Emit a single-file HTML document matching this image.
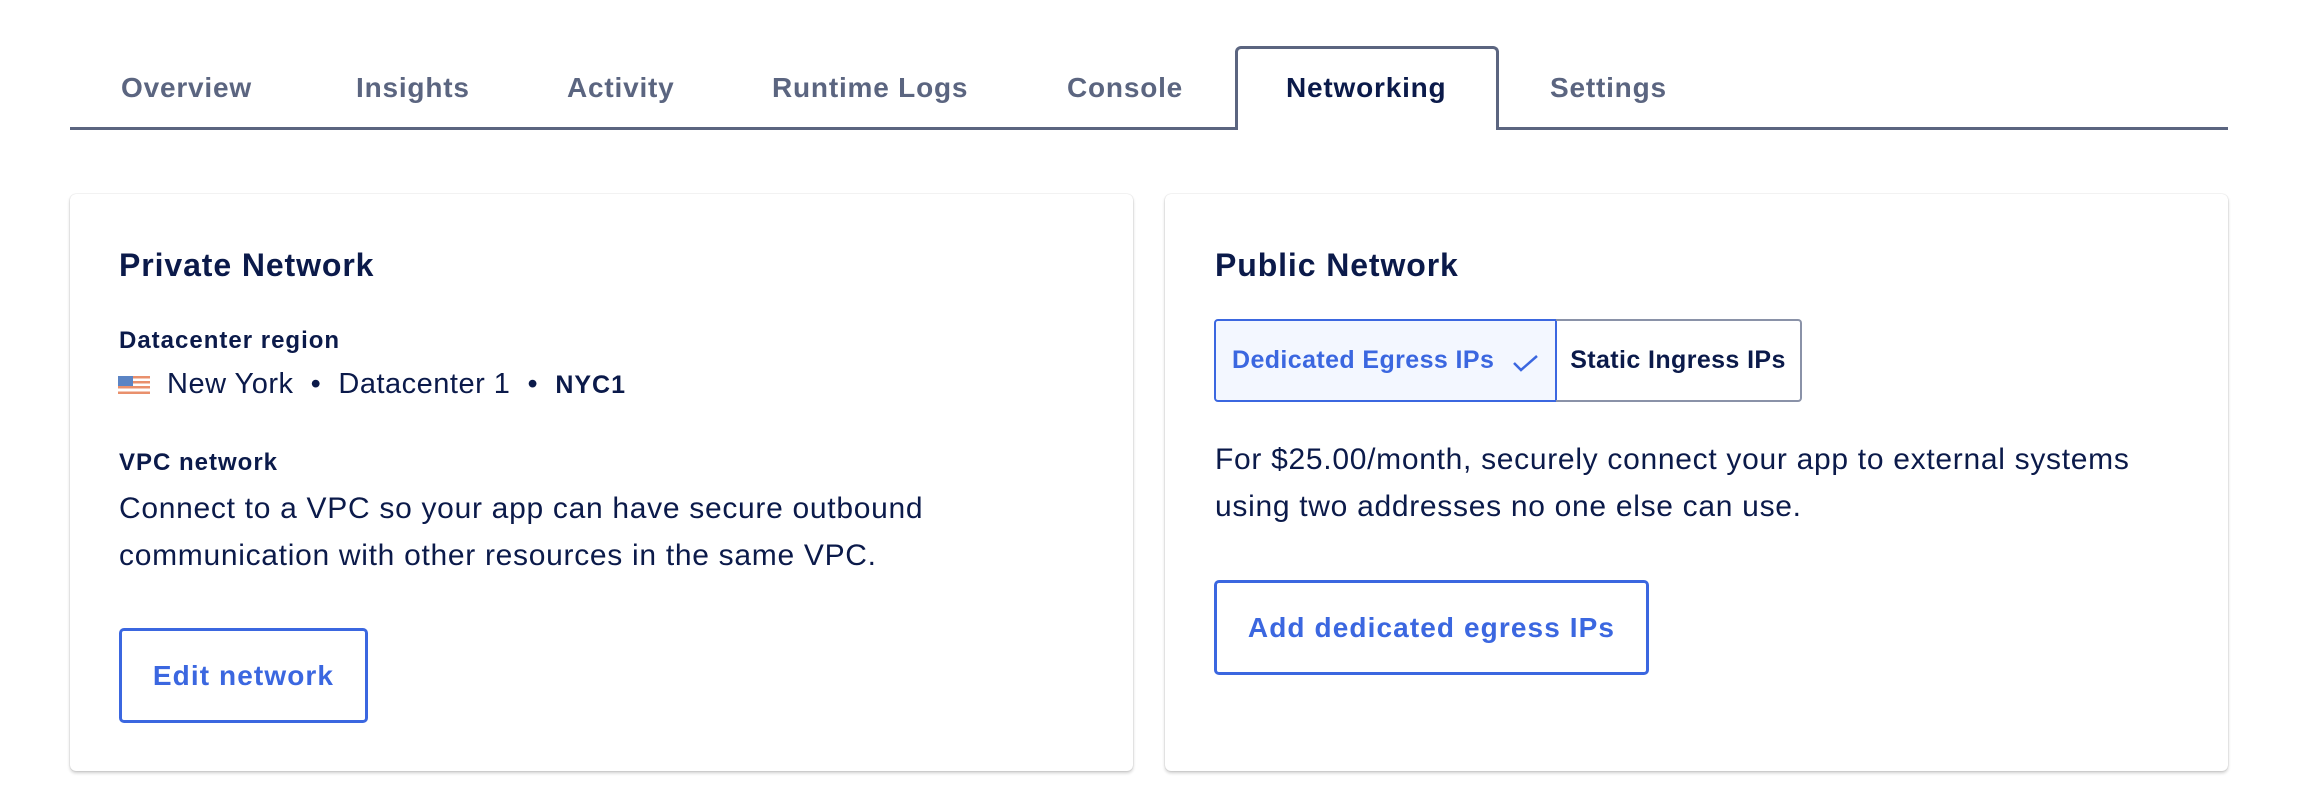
<!DOCTYPE html>
<html><head><meta charset="utf-8"><style>
*{margin:0;padding:0;box-sizing:border-box}
body{width:2300px;height:802px;background:#fff;font-family:"Liberation Sans",sans-serif;position:relative;overflow:hidden;color:#0b1a4a}
.a{position:absolute;white-space:nowrap}
.tab{position:absolute;top:70px;font-size:28px;font-weight:600;color:#5b6580;line-height:36px;letter-spacing:0.8px}
.line{position:absolute;left:70px;top:127px;width:2158px;height:3px;background:#5b6580}
.act{position:absolute;left:1235px;top:46px;width:264px;height:84px;border:3px solid #5b6580;border-bottom:none;border-radius:6px 6px 0 0;background:#fff}
.card{position:absolute;top:194px;height:577px;background:#fff;border-radius:6px;box-shadow:0 0 1px rgba(0,0,0,.25),0 2px 3px rgba(0,0,0,.2)}
h2{position:absolute;font-size:32px;font-weight:600;line-height:40px;letter-spacing:0.9px}
.lbl{font-size:24px;font-weight:600;line-height:30px;letter-spacing:1px}
.p{font-size:30px;line-height:47px;color:#0b1a4a;letter-spacing:0.7px}
.btn{position:absolute;border:3px solid #3b67e0;border-radius:5px;color:#3b67e0;font-size:28px;font-weight:600;display:flex;align-items:center;justify-content:center;letter-spacing:1.1px}
</style></head><body>
<div class="line"></div>
<div class="act"></div>
<div class="tab" style="left:121px">Overview</div>
<div class="tab" style="left:356px">Insights</div>
<div class="tab" style="left:567px">Activity</div>
<div class="tab" style="left:772px">Runtime Logs</div>
<div class="tab" style="left:1067px">Console</div>
<div class="tab" style="left:1286px;color:#0b1a4a">Networking</div>
<div class="tab" style="left:1550px">Settings</div>

<div class="card" style="left:70px;width:1063px"></div>
<div class="card" style="left:1165px;width:1063px"></div>

<h2 class="a" style="left:119px;top:245px">Private Network</h2>
<div class="a lbl" style="left:119px;top:326px">Datacenter region</div>
<svg class="a" style="left:118px;top:376px" width="32" height="18" viewBox="0 0 32 18">
<rect y="0" width="32" height="2.5" fill="#e9906c"/><rect y="5" width="32" height="2.5" fill="#e9906c"/><rect y="10" width="32" height="2.5" fill="#e9906c"/><rect y="15.5" width="32" height="2.5" fill="#e9906c"/>
<rect width="15" height="10" fill="#5b84c4"/></svg>
<div class="a p" style="left:167px;top:361px;font-size:29px;letter-spacing:0.5px">New York &nbsp;•&nbsp; Datacenter 1 &nbsp;•&nbsp; <span style="font-weight:600;font-size:25px;letter-spacing:1px">NYC1</span></div>
<div class="a lbl" style="left:119px;top:448px">VPC network</div>
<div class="a p" style="left:119px;top:485px">Connect to a VPC so your app can have secure outbound<br>communication with other resources in the same VPC.</div>
<div class="btn" style="left:119px;top:628px;width:249px;height:95px">Edit network</div>

<h2 class="a" style="left:1215px;top:245px">Public Network</h2>
<div class="a" style="left:1214px;top:319px;width:343px;height:83px;background:#f3f7ff;border:2px solid #3b67e0;border-radius:4px 0 0 4px;color:#3b67e0;font-size:25px;font-weight:600;line-height:79px;padding-left:16px;letter-spacing:0.4px">Dedicated Egress IPs
<svg style="position:absolute;left:296px;top:33px" width="28" height="19" viewBox="0 0 28 19"><path d="M2 9 L9 16 L25 2" fill="none" stroke="#3b67e0" stroke-width="2.5"/></svg></div>
<div class="a" style="left:1556px;top:319px;width:246px;height:83px;border:2px solid #8a92a8;border-left:none;border-radius:0 4px 4px 0;font-size:25px;font-weight:600;line-height:79px;text-align:center;letter-spacing:0.4px">Static Ingress IPs</div>
<div class="a p" style="left:1215px;top:436px">For $25.00/month, securely connect your app to external systems<br>using two addresses no one else can use.</div>
<div class="btn" style="left:1214px;top:580px;width:435px;height:95px">Add dedicated egress IPs</div>
</body></html>
